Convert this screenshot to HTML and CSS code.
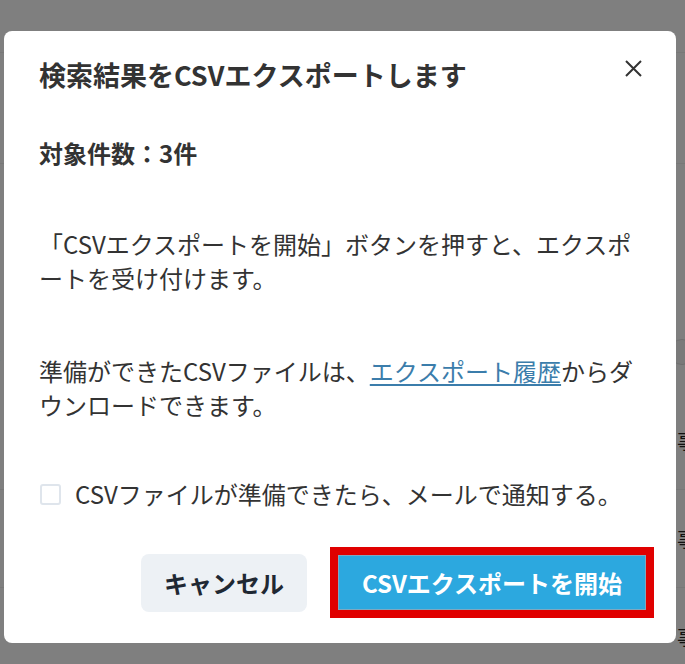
FILE: index.html
```html
<!DOCTYPE html>
<html lang="ja">
<head>
    <meta charset="UTF-8">
    <meta name="viewport" content="width=device-width, initial-scale=1.0">
    <title>CSVエクスポート</title>
    <link rel="stylesheet" href="styles.css">
</head>
<body>
    <div class="page">
        <div class="page-head"></div>
        <div class="page-bar"></div>
        <div class="pager">
            <span class="pager-prev">&lsaquo;</span>
            <span class="pager-next"></span>
        </div>
        <div class="row"><span class="row-text">事務所</span></div>
        <div class="row"><span class="row-text">事務所</span></div>
        <div class="row"><span class="row-text">事務所</span></div>
    </div>

    <div class="overlay">
        <div class="modal">
            <div class="modal-header">
                <h2 class="modal-title">検索結果をCSVエクスポートします</h2>
                <button class="close-btn" aria-label="閉じる">
                    <svg width="17" height="17" viewBox="0 0 17 17">
                        <path d="M1 1 L16 16 M16 1 L1 16" stroke="#333" stroke-width="2" fill="none"/>
                    </svg>
                </button>
            </div>
            <p class="count">対象件数：3件</p>
            <p class="text first">「CSVエクスポートを開始」ボタンを押すと、エクスポートを受け付けます。</p>
            <p class="text second">準備ができたCSVファイルは、<a href="#" class="link">エクスポート履歴</a>からダウンロードできます。</p>
            <label class="check">
                <span class="check-box"></span>
                <span>CSVファイルが準備できたら、メールで通知する。</span>
            </label>
            <div class="modal-footer">
                <button class="btn btn-cancel">キャンセル</button>
                <span class="highlight">
                    <button class="btn btn-primary">CSVエクスポートを開始</button>
                </span>
            </div>
        </div>
    </div>
</body>
</html>
```

FILE: styles.css
```css
body {
    margin: 0;
    font-family: "Noto Sans CJK JP", "Noto Sans", sans-serif;
    color: #333;
    background: #fff;
}
.page {
    height: 664px;
    overflow: hidden;
}
.page-head {
    height: 52px;
    border-bottom: 1px solid #f0f0f0;
}
.page-bar {
    height: 110px;
    border-bottom: 1px solid #f0f0f0;
}
.pager {
    display: flex;
    justify-content: space-between;
    align-items: center;
    height: 80px;
    margin: 148px -10px 0 0;
}
.pager-prev {
    font-size: 24px;
    color: #222;
    margin-left: -6px;
}
.pager-next {
    width: 24px;
    height: 24px;
    border-radius: 50%;
    border: 1px solid #ddd;
    background: #f5f5f5;
}
.row {
    height: 97px;
    border-bottom: 1px solid #f0f0f0;
    padding-left: 677px;
    display: flex;
    align-items: center;
    font-size: 20px;
    color: #222;
    white-space: nowrap;
}
.row:first-of-type {
    height: 94px;
}
.overlay {
    position: fixed;
    inset: 0;
    background: rgba(0, 0, 0, 0.5);
    padding: 31px 9px 0 4px;
}
.modal {
    background: #fff;
    border-radius: 8px;
    padding: 24px 35px 25px;
}
.modal-header {
    display: flex;
    justify-content: space-between;
    align-items: flex-start;
}
.modal-title {
    margin: 0;
    font-size: 27px;
    line-height: 40px;
    font-weight: 700;
    color: #333;
}
.close-btn {
    border: none;
    background: none;
    padding: 0;
    margin: 5px -1px 0 0;
    width: 17px;
    height: 17px;
    display: flex;
}
.count {
    margin: 41px 0 0;
    font-size: 24px;
    line-height: 34px;
    font-weight: 700;
}
.text {
    margin: 57px 0 0;
    font-size: 24px;
    line-height: 34px;
}
.text.second {
    margin-top: 59px;
}
.link {
    color: #3b7dab;
    text-decoration: underline;
    text-underline-offset: 3px;
}
.check {
    display: flex;
    align-items: center;
    gap: 14px;
    margin-top: 55px;
    font-size: 24px;
    line-height: 34px;
}
.check-box {
    width: 17px;
    height: 17px;
    border: 2px solid #dfe5ec;
    border-radius: 3px;
    margin-left: 1px;
}
.modal-footer {
    display: flex;
    justify-content: flex-end;
    align-items: center;
    gap: 23px;
    margin: 36px -13px 0 0;
}
.btn {
    font-family: inherit;
    font-size: 24px;
    font-weight: 700;
    border: none;
    cursor: pointer;
}
.btn-cancel {
    height: 58px;
    padding: 0 23px;
    border-radius: 8px;
    background: #edf1f5;
    color: #1f2833;
}
.highlight {
    display: flex;
    border: 8px solid #e00000;
    padding: 0;
}
.btn-primary {
    height: 55px;
    width: 308px;
    background: #2ca8df;
    color: #fff;
    border: 1px solid #7fa8c0;
    padding: 0;
}
```
